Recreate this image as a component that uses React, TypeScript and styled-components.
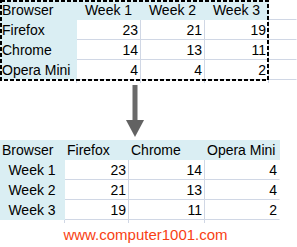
import React from "react";
import styled, { createGlobalStyle, css } from "styled-components";

const GRID = "#d0d7e5";
const FILL = "#daeef3";

const Global = createGlobalStyle`
  html, body { margin: 0; padding: 0; background: #fff; }
  body { font-family: "Liberation Sans", Arial, sans-serif; color: #000; }
`;

const Page = styled.div`
  width: 297px;
  height: 247px;
  overflow: hidden;
  display: flex;
  flex-direction: column;
`;

const SheetWrap = styled.div`
  position: relative;
  display: flex;
  flex-direction: column;
`;

const Sheet = styled.div<{ $cols: string }>`
  display: grid;
  grid-template-columns: ${(p) => p.$cols};
  grid-auto-rows: 20px;
  font-size: 14px;
`;

const Cell = styled.div<{
  $fill?: boolean;
  $align?: "left" | "center" | "right";
  $noRight?: boolean;
  $noBottom?: boolean;
}>`
  box-sizing: border-box;
  height: 20px;
  padding: 1px 2px 0 2px;
  line-height: 19px;
  white-space: nowrap;
  overflow: hidden;
  text-align: ${(p) => p.$align || "left"};
  border-right: 1px solid ${GRID};
  border-bottom: 1px solid ${GRID};
  background: #fff;
  ${(p) =>
    p.$fill &&
    css`
      background: ${FILL};
      border-color: transparent;
    `}
  ${(p) => p.$noRight && css`border-right-color: transparent;`}
  ${(p) => p.$noBottom && css`border-bottom-color: transparent;`}
`;

const Stub = styled.div<{ $cols: string }>`
  display: grid;
  grid-template-columns: ${(p) => p.$cols};
  height: 3px;
`;

const StubCell = styled.div<{ $line?: boolean }>`
  box-sizing: border-box;
  border-right: 1px solid ${(p) => (p.$line ? GRID : "transparent")};
`;

const Marquee = styled.svg`
  position: absolute;
  left: 0;
  top: 0;
  pointer-events: none;
`;

const ArrowRow = styled.div`
  height: 57px;
  box-sizing: border-box;
  padding: 2px 0 0 126px;
  display: flex;
  align-items: flex-start;
`;

const Url = styled.div`
  height: 24px;
  line-height: 24px;
  font-size: 15px;
  color: #f83f14;
  text-align: center;
  padding-right: 6px;
`;

const topCols = "77px 64px 64px 64px 1fr";
const bottomCols = "65px 64px 76px 75px 1fr";

const topData: [string, number, number, number][] = [
  ["Firefox", 23, 21, 19],
  ["Chrome", 14, 13, 11],
  ["Opera Mini", 4, 4, 2],
];

const bottomData: [string, number, number, number][] = [
  ["Week 1", 23, 14, 4],
  ["Week 2", 21, 13, 4],
  ["Week 3", 19, 11, 2],
];

export default function App() {
  return (
    <Page>
      <Global />
      <SheetWrap>
        <Sheet $cols={topCols}>
          <Cell $fill>Browser</Cell>
          <Cell $fill $align="center">Week 1</Cell>
          <Cell $fill $align="center">Week 2</Cell>
          <Cell $fill $align="center">Week 3</Cell>
          <Cell $noRight />
          {topData.map(([name, a, b, c]) => (
            <React.Fragment key={name}>
              <Cell $fill>{name}</Cell>
              <Cell $align="right">{a}</Cell>
              <Cell $align="right">{b}</Cell>
              <Cell $align="right">{c}</Cell>
              <Cell $noRight />
            </React.Fragment>
          ))}
        </Sheet>
        <Stub $cols="77px 64px 64px 64px 1fr">
          <StubCell $line />
          <StubCell $line />
          <StubCell $line />
          <StubCell $line />
          <StubCell />
        </Stub>
        <Marquee width="270" height="82" viewBox="0 0 270 82">
          <rect
            x="1"
            y="1"
            width="267"
            height="79"
            fill="none"
            stroke="#000"
            strokeWidth="2"
            strokeDasharray="4 2"
          />
        </Marquee>
      </SheetWrap>

      <ArrowRow>
        <svg width="18" height="53" viewBox="0 0 18 53">
          <rect x="6.5" y="0" width="5" height="36" fill="#6a6a6a" />
          <polygon points="0,35 18,35 9,52" fill="#626262" />
        </svg>
      </ArrowRow>

      <SheetWrap>
        <Sheet $cols={bottomCols}>
          <Cell $fill>Browser</Cell>
          <Cell $fill>Firefox</Cell>
          <Cell $fill>Chrome</Cell>
          <Cell $fill>Opera Mini</Cell>
          <Cell $noRight $noBottom />
          {bottomData.map(([wk, a, b, c]) => (
            <React.Fragment key={wk}>
              <Cell $fill $align="center">{wk}</Cell>
              <Cell $align="right">{a}</Cell>
              <Cell $align="right">{b}</Cell>
              <Cell $align="right" $noRight>{c}</Cell>
              <Cell $noRight $noBottom />
            </React.Fragment>
          ))}
        </Sheet>
        <Stub $cols={bottomCols}>
          <StubCell $line />
          <StubCell $line />
          <StubCell $line />
          <StubCell />
          <StubCell />
        </Stub>
      </SheetWrap>

      <Url>www.computer1001.com</Url>
    </Page>
  );
}
